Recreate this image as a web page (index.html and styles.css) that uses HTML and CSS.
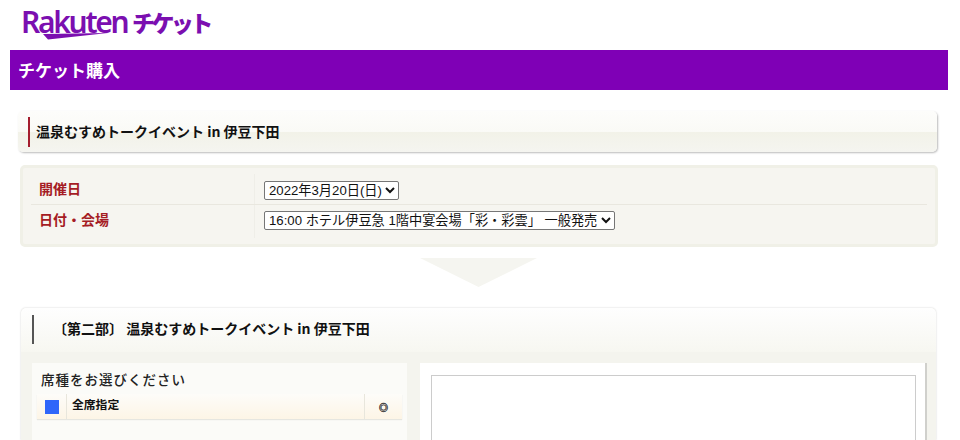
FILE: index.html
```html
<!DOCTYPE html>
<html lang="ja">
<head>
<meta charset="utf-8">
<title>チケット購入</title>
<link rel="stylesheet" href="styles.css">
</head>
<body>
<header class="logo">
  <div class="logo-word">
    <span class="logo-latin">Rakuten</span>
    <svg class="logo-swoosh" width="66" height="7" viewBox="0 0 66 7"><path d="M0 1 65 0 5 6.5Z" fill="#7b0fb0"/></svg>
  </div>
  <span class="logo-jp">チケット</span>
</header>
<main class="page">
  <h1 class="bar">チケット購入</h1>
  <section class="event-card">
    <h2 class="event-title">温泉むすめトークイベント in 伊豆下田</h2>
  </section>
  <section class="form-card">
    <div class="form-row">
      <div class="form-label">開催日</div>
      <div class="form-field">
        <select class="pick"><option>2022年3月20日(日)</option></select>
      </div>
    </div>
    <div class="form-row">
      <div class="form-label">日付・会場</div>
      <div class="form-field">
        <select class="pick"><option>16:00 ホテル伊豆急 1階中宴会場「彩・彩雲」 一般発売</option></select>
      </div>
    </div>
  </section>
  <div class="arrow"></div>
  <section class="seat-card">
    <div class="seat-head">
      <h2 class="seat-title">〔第二部〕 温泉むすめトークイベント in 伊豆下田</h2>
    </div>
    <div class="seat-body">
      <div class="seat-left">
        <h3 class="seat-prompt">席種をお選びください</h3>
        <div class="seat-row">
          <div class="seat-swatch-cell"><span class="seat-swatch"></span></div>
          <div class="seat-name">全席指定</div>
          <div class="seat-mark">◎</div>
        </div>
      </div>
      <div class="seat-right">
        <div class="seat-map"></div>
      </div>
    </div>
  </section>
</main>
</body>
</html>
```
FILE: styles.css
```css
* { box-sizing: border-box; }
html, body { margin: 0; height: 440px; overflow: hidden; background: #fff; }
body { font-family: "Liberation Sans", "Noto Sans CJK JP", sans-serif; color: #111; }
h1, h2, h3 { margin: 0; }

.logo { height: 50px; padding: 3px 0 0 21px; display: flex; align-items: flex-start; color: #7b0fb0; }
.logo-word { position: relative; width: 111px; height: 40px; }
.logo-latin { display: block; font-family: "Noto Sans", sans-serif; font-weight: 600; font-size: 30px; line-height: 38px; letter-spacing: -2.3px; }
.logo-swoosh { position: absolute; left: 22px; top: 30px; }
.logo-jp { font-family: "Noto Sans CJK JP", sans-serif; font-weight: 900; font-size: 23px; line-height: 38px; letter-spacing: -3.6px; }

.page { padding: 0 12px 0 10px; }
.bar { height: 40px; background: #7f00b6; color: #fff; font-size: 17px; font-weight: 700; line-height: 40px; padding-left: 8px; font-family: "Noto Sans CJK JP", sans-serif; }

.event-card { width: 919px; height: 41px; margin: 21px 0 0 8px; border-radius: 5px; background: linear-gradient(#fdfdfb 0, #fafaf6 50%, #f2f2e8 52%, #f5f5f0 100%); box-shadow: 1px 1px 2px #bbb; padding: 6px 0 0 10px; }
.event-title { height: 30px; border-left: 2px solid #a41d2e; padding-left: 6px; font-size: 14px; font-weight: 700; line-height: 28px; font-family: "Noto Sans CJK JP", sans-serif; }

.form-card { width: 918px; height: 82px; margin: 13px 0 0 10px; border-radius: 5px; background: #f6f5f0; border: 3px solid #f0f0e7; padding: 6px 8px 0; }
.form-row { display: flex; height: 30px; }
.form-row + .form-row { border-top: 1px solid #e9e7df; height: 34px; }
.form-label { width: 224px; padding-left: 8px; color: #a51c24; font-size: 14px; font-weight: 700; line-height: 28px; border-right: 1px solid #efeee8; font-family: "Noto Sans CJK JP", sans-serif; }
.form-field { padding: 7px 0 0 9px; }
.form-row + .form-row .form-field { padding-top: 6px; }
.pick { display: block; height: 19px; padding: 0; font-size: 13.2px; font-family: "Liberation Sans", "Noto Sans CJK JP", sans-serif; background: #fff; color: #111; border: 1px solid #767676; border-radius: 2px; }

.arrow { width: 117px; height: 29px; margin: 11px 0 0 410px; background: #f5f5f0; clip-path: polygon(0 0, 100% 0, 50% 100%); }

.seat-card { width: 915px; height: 132px; margin: 21px 0 0 11px; border-radius: 5px 5px 0 0; background: #f4f4ee; box-shadow: 0 0 2px #ccc; }
.seat-head { height: 44px; padding: 7px 0 0 11px; border-radius: 5px 5px 0 0; background: linear-gradient(#fefefe, #f7f7f1); }
.seat-title { height: 29px; border-left: 2px solid #555; padding-left: 19px; font-size: 14px; font-weight: 700; line-height: 27px; font-family: "Noto Sans CJK JP", sans-serif; }
.seat-body { display: flex; padding: 11px 9px 0 11px; gap: 13px; }
.seat-left { width: 375px; height: 77px; background: #fbfbf8; padding: 7px 5px 0 5px; }
.seat-prompt { font-size: 13.5px; font-weight: 500; line-height: 18px; letter-spacing: 1px; padding-left: 4px; color: #222; font-family: "Noto Sans CJK JP", sans-serif; }
.seat-row { display: flex; height: 25px; margin-top: 6px; background: linear-gradient(#fdfcf9, #fdf5e6); box-shadow: 0 1px 1px #e6e6e0; }
.seat-swatch-cell { width: 30px; border-right: 1px solid #e8e6dc; padding: 6px 0 0 8px; }
.seat-swatch { display: block; width: 14px; height: 14px; background: #2f66fa; }
.seat-name { width: 298px; padding-left: 5px; font-size: 11.8px; font-weight: 700; line-height: 20px; border-right: 1px solid #e8e6dc; font-family: "Noto Sans CJK JP", sans-serif; }
.seat-mark { flex: 1; text-align: center; font-size: 9px; font-weight: 700; line-height: 27px; color: #444; -webkit-text-stroke: 0.5px #444; font-family: "Noto Sans CJK JP", sans-serif; }
.seat-right { flex: 1; height: 77px; background: #fff; border-right: 2px solid #d0d0cc; padding: 12px 9px 0 11px; }
.seat-map { height: 65px; border: 1px solid #ccc; border-bottom: 0; background: #fff; }
```
